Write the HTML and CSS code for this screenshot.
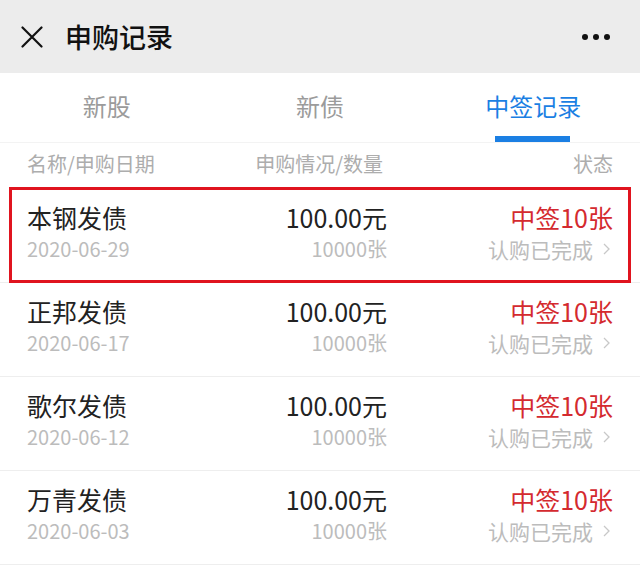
FILE: index.html
```html
<!DOCTYPE html>
<html lang="zh-CN">
<head>
<meta charset="utf-8">
<title>申购记录</title>
<link rel="stylesheet" href="styles.css">
</head>
<body>
<div class="page">
  <header class="topbar">
    <svg class="close" width="22" height="22" viewBox="0 0 22 22"><path d="M1.5 1.5 L20.5 20.5 M20.5 1.5 L1.5 20.5" stroke="#111" stroke-width="2.2" stroke-linecap="round" fill="none"/></svg>
    <h1 class="title">申购记录</h1>
    <div class="more"><span></span><span></span><span></span></div>
  </header>
  <nav class="tabs">
    <div class="tab">新股</div>
    <div class="tab">新债</div>
    <div class="tab active">中签记录</div>
  </nav>
  <div class="thead">
    <div>名称/申购日期</div>
    <div class="mid">申购情况/数量</div>
    <div class="end">状态</div>
  </div>
  <div class="row marked">
    <span class="mark"></span>
    <div class="col"><div class="main">本钢发债</div><div class="sub">2020-06-29</div></div>
    <div class="col mid"><div class="main">100.00元</div><div class="sub">10000张</div></div>
    <div class="col end"><div class="main red">中签10张</div><div class="sub status">认购已完成<svg class="chev" width="7" height="12" viewBox="0 0 7 12"><path d="M1 1 L6 6 L1 11" stroke="#c8c8c8" stroke-width="1.3" fill="none"/></svg></div></div>
  </div>
  <div class="row">
    <div class="col"><div class="main">正邦发债</div><div class="sub">2020-06-17</div></div>
    <div class="col mid"><div class="main">100.00元</div><div class="sub">10000张</div></div>
    <div class="col end"><div class="main red">中签10张</div><div class="sub status">认购已完成<svg class="chev" width="7" height="12" viewBox="0 0 7 12"><path d="M1 1 L6 6 L1 11" stroke="#c8c8c8" stroke-width="1.3" fill="none"/></svg></div></div>
  </div>
  <div class="row">
    <div class="col"><div class="main">歌尔发债</div><div class="sub">2020-06-12</div></div>
    <div class="col mid"><div class="main">100.00元</div><div class="sub">10000张</div></div>
    <div class="col end"><div class="main red">中签10张</div><div class="sub status">认购已完成<svg class="chev" width="7" height="12" viewBox="0 0 7 12"><path d="M1 1 L6 6 L1 11" stroke="#c8c8c8" stroke-width="1.3" fill="none"/></svg></div></div>
  </div>
  <div class="row">
    <div class="col"><div class="main">万青发债</div><div class="sub">2020-06-03</div></div>
    <div class="col mid"><div class="main">100.00元</div><div class="sub">10000张</div></div>
    <div class="col end"><div class="main red">中签10张</div><div class="sub status">认购已完成<svg class="chev" width="7" height="12" viewBox="0 0 7 12"><path d="M1 1 L6 6 L1 11" stroke="#c8c8c8" stroke-width="1.3" fill="none"/></svg></div></div>
  </div>
</div>
</body>
</html>
```
FILE: styles.css
```css
* { box-sizing: border-box; margin: 0; padding: 0; }
html, body { background: #fff; }
body {
  font-family: "Noto Sans CJK SC", "Noto Sans", sans-serif;
  width: 640px;
  height: 565px;
  overflow: hidden;
}
.page { width: 640px; }
.topbar {
  height: 73px;
  background: #ececec;
  display: flex;
  align-items: center;
  padding: 0 30px 0 21px;
}
.close { display: block; flex: none; }
.title {
  margin-left: 22px;
  font-size: 27px;
  font-weight: 500;
  color: #111;
  line-height: 36px;
  flex: 1;
}
.more { display: flex; gap: 5px; }
.more span {
  width: 6px; height: 6px; border-radius: 50%; background: #111; display: block;
}
.tabs {
  height: 70px;
  display: grid;
  grid-template-columns: 1fr 1fr 1fr;
  border-bottom: 1px solid #f3f3f3;
}
.tab {
  position: relative;
  display: flex;
  align-items: center;
  justify-content: center;
  font-size: 24px;
  color: #9b9b9b;
  padding-bottom: 5px;
}
.tab.active { color: #1b7fe3; }
.tab.active::after {
  content: "";
  position: absolute;
  bottom: 0;
  left: 50%;
  width: 75px;
  margin-left: -38px;
  height: 6px;
  background: #1b7fe3;
}
.thead, .row {
  display: grid;
  grid-template-columns: 200px 160px 1fr;
  padding: 0 27px;
}
.thead {
  height: 44px;
  align-items: center;
  font-size: 20px;
  color: #adadad;
  padding-bottom: 4px;
}
.mid { text-align: right; }
.end { text-align: right; }
.thead .mid { padding-right: 4px; }
.row {
  height: 94px;
  border-bottom: 1px solid #eeeeee;
  padding-top: 13px;
  position: relative;
}
.row.marked { height: 96px; padding-top: 15px; }
.mark {
  position: absolute;
  left: 9px; right: 9px; top: 0; bottom: -1px;
  border: 3px solid #e0141f;
  pointer-events: none;
}
.main {
  font-size: 25px;
  line-height: 30px;
  color: #222;
}
.main.red { color: #d42a2f; }
.sub {
  margin-top: 3px;
  font-size: 20px;
  line-height: 28px;
  color: #bcbcbc;
  display: flex;
  align-items: center;
}
.sub.status { font-size: 21px; }
.mid .sub, .end .sub { justify-content: flex-end; }
.chev { margin-left: 10px; margin-right: 3px; flex: none; }
```
